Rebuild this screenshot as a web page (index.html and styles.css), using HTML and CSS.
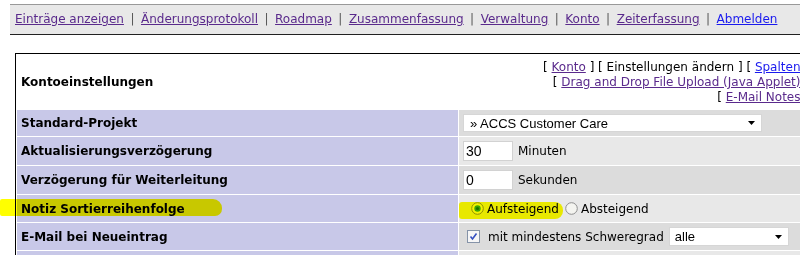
FILE: index.html
```html
<!DOCTYPE html>
<html lang="de">
<head>
  <meta charset="UTF-8">
  <title>Kontoeinstellungen</title>
  <link rel="stylesheet" href="styles.css">
</head>
<body>

<div class="menu">
  <a href="#">Einträge anzeigen</a><span class="sep">|</span><a href="#">Änderungsprotokoll</a><span class="sep">|</span><a href="#">Roadmap</a><span class="sep">|</span><a href="#">Zusammenfassung</a><span class="sep">|</span><a href="#">Verwaltung</a><span class="sep">|</span><a href="#">Konto</a><span class="sep">|</span><a href="#">Zeiterfassung</a><span class="sep">|</span><a href="#" class="new">Abmelden</a>
</div>

<table class="settings">
  <tr class="head">
    <td class="label title">Kontoeinstellungen</td>
    <td class="links">[ <a href="#">Konto</a> ] [ Einstellungen ändern ] [ <a href="#" class="new">Spalten</a> ]<br>[ <a href="#">Drag and Drop File Upload (Java Applet)</a> ]<br>[ <a href="#">E-Mail Notes</a> ]</td>
  </tr>
  <tr class="r26">
    <td class="label">Standard-Projekt</td>
    <td class="value dark">
      <span class="select wide"><select><option>» ACCS Customer Care</option></select><svg class="arrow" width="7" height="4" viewBox="0 0 7 4"><path d="M0 0H7L3.5 4Z" fill="#000"/></svg></span>
    </td>
  </tr>
  <tr class="r28">
    <td class="label">Aktualisierungsverzögerung</td>
    <td class="value light">
      <span class="field"><input type="text" value="30"> Minuten</span>
    </td>
  </tr>
  <tr class="r28">
    <td class="label">Verzögerung für Weiterleitung</td>
    <td class="value dark">
      <span class="field"><input type="text" value="0"> Sekunden</span>
    </td>
  </tr>
  <tr class="r27">
    <td class="label">Notiz Sortierreihenfolge</td>
    <td class="value light">
      <span class="field radios">
        <label><svg width="13" height="13" viewBox="0 0 13 13"><circle cx="6.5" cy="6.5" r="5.8" fill="#f4f4f0" stroke="#8f8f8f"/><circle cx="6.5" cy="6.5" r="3.2" fill="#3aa63a"/><circle cx="6.5" cy="6.5" r="1.6" fill="#1e6e1e"/></svg>Aufsteigend</label>
        <label><svg width="13" height="13" viewBox="0 0 13 13"><circle cx="6.5" cy="6.5" r="5.8" fill="#f4f4f0" stroke="#8f8f8f"/></svg>Absteigend</label>
      </span>
    </td>
  </tr>
  <tr class="r27">
    <td class="label">E-Mail bei Neueintrag</td>
    <td class="value dark">
      <span class="field">
        <svg class="check" width="13" height="13" viewBox="0 0 13 13"><rect x="0.5" y="0.5" width="12" height="12" fill="#f6f6f6" stroke="#8593a8"/><path d="M3.5 6.5L5.5 9L9.5 3.5" fill="none" stroke="#3550c0" stroke-width="1.6"/></svg>
        mit mindestens Schweregrad
        <span class="select small"><select><option>alle</option></select><svg class="arrow" width="7" height="4" viewBox="0 0 7 4"><path d="M0 0H7L3.5 4Z" fill="#000"/></svg></span>
      </span>
    </td>
  </tr>
  <tr class="r27">
    <td class="label">&nbsp;</td>
    <td class="value light">&nbsp;</td>
  </tr>
</table>

<div class="marker one"></div>
<div class="marker two"></div>

</body>
</html>
```

FILE: styles.css
```css
body {
  margin: 0;
  padding: 4px 0 0 10px;
  font-family: "DejaVu Sans", Verdana, sans-serif;
  font-size: 12px;
  color: #000;
  background: #fff;
}
a {
  color: #5a2a8c;
}
a.new {
  color: #1a1aee;
}
.menu {
  background: #e8e8e8;
  border-top: 1px solid #999;
  border-bottom: 1px solid #222;
  padding: 7px 5px;
  line-height: 15px;
  white-space: nowrap;
}
.sep {
  margin: 0 6.5px;
  color: #555;
}
.settings {
  margin: 18px 0 0 5px;
  border: 1px solid #000;
  border-spacing: 1px;
  table-layout: fixed;
  width: 820px;
  background: #fff;
}
.settings td {
  padding: 0 4px;
  vertical-align: middle;
  white-space: nowrap;
}
.settings td.label {
  width: 433px;
  font-weight: bold;
}
.head td {
  height: 54px;
}
.head .links {
  text-align: right;
  line-height: 15px;
  padding-right: 24px;
}
.r26 td { height: 26px; }
.r28 td { height: 28px; }
.r27 td { height: 27px; }
.settings tr:not(.head) td.label {
  background: #c8c8e8;
}
.dark {
  background: #dcdcdc;
}
.light {
  background: #e8e8e8;
}
.field {
  display: flex;
  align-items: center;
  gap: 5px;
}
.field input {
  width: 50px;
  height: 20px;
  box-sizing: border-box;
  border: 1px solid #d2d2d2;
  padding: 0 2px;
  font-family: "Liberation Sans", Arial, sans-serif;
  font-size: 14px;
  margin: 0;
}
.radios {
  gap: 0;
  padding-left: 8px;
}
.radios label {
  display: flex;
  align-items: center;
  gap: 3px;
  margin-right: 6px;
}
.check {
  margin-left: 4px;
  margin-right: 3px;
}
.select {
  position: relative;
  display: inline-block;
}
.select select {
  appearance: none;
  -webkit-appearance: none;
  background: #fff;
  border: 1px solid #d6d6d6;
  border-radius: 0;
  font-family: "Liberation Sans", Arial, sans-serif;
  font-size: 13px;
  color: #000;
  margin: 0;
  display: block;
}
.select.wide select {
  width: 299px;
  height: 18px;
  padding: 0 6px;
}
.select.small select {
  width: 120px;
  height: 19px;
  padding: 0 5px;
}
.select .arrow {
  position: absolute;
  right: 7px;
  top: 50%;
  margin-top: -2px;
}
.marker {
  position: absolute;
  background: #ffff00;
  mix-blend-mode: multiply;
}
.marker.one {
  left: 0;
  top: 199px;
  width: 222px;
  height: 17px;
  border-radius: 2px 9px 7px 2px;
}
.marker.two {
  left: 459px;
  top: 202px;
  width: 104px;
  height: 17px;
  border-radius: 3px 8px 8px 3px;
}
```
